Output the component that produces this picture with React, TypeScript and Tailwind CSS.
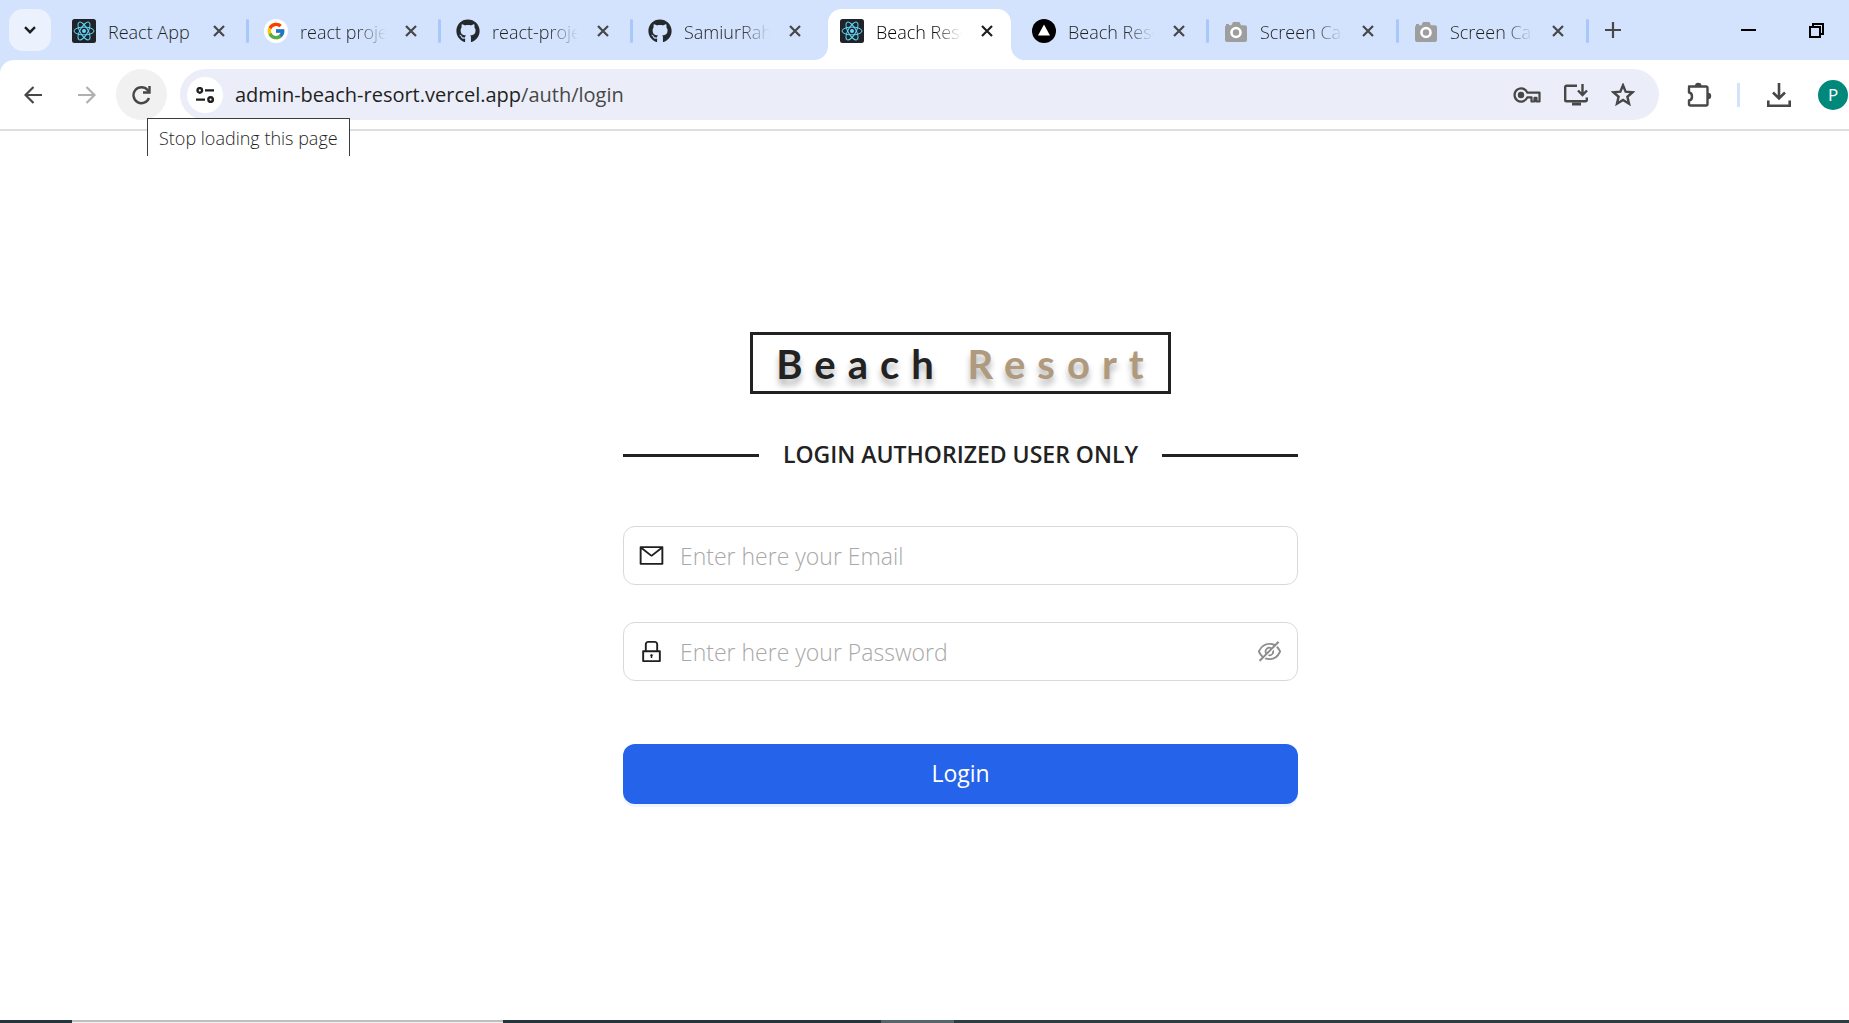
import React from "react";
import { AiOutlineEyeInvisible, AiOutlineLock, AiOutlineMail } from "react-icons/ai";
import { FcGoogle } from "react-icons/fc";
import { FaGithub } from "react-icons/fa";

function ReactFavicon() {
  return (
    <svg viewBox="0 0 24 24" className="size-6">
      <rect width="24" height="24" rx="2.5" fill="#20232a" />
      <g fill="none" stroke="#61dafb" strokeWidth="1">
        <ellipse cx="12" cy="12" rx="10" ry="3.9" />
        <ellipse cx="12" cy="12" rx="10" ry="3.9" transform="rotate(60 12 12)" />
        <ellipse cx="12" cy="12" rx="10" ry="3.9" transform="rotate(120 12 12)" />
      </g>
      <circle cx="12" cy="12" r="2" fill="#61dafb" />
    </svg>
  );
}

function GoogleFavicon() {
  return (
    <span className="flex size-6 items-center justify-center rounded-full bg-white">
      <FcGoogle className="size-5" />
    </span>
  );
}

function GithubFavicon() {
  return <FaGithub className="size-6 text-[#24292f]" />;
}

function VercelFavicon() {
  return (
    <svg viewBox="0 0 24 24" className="size-6">
      <circle cx="12" cy="12" r="12" fill="#000" />
      <path d="M12 5.5 18 16.5H6Z" fill="#fff" />
    </svg>
  );
}

function CameraFavicon() {
  return (
    <svg viewBox="0 0 24 24" className="size-6">
      <path
        d="M2 6.500V5h3v1.200h2.500L9 3h6.500l1.500 3.200H21a2 2 0 0 1 2 2V21a2 2 0 0 1-2 2H3a2 2 0 0 1-2-2V8.500a2 2 0 0 1 1-2Z"
        fill="#9e9e9e"
      />
      <circle cx="12" cy="13.500" r="4.500" fill="#9e9e9e" stroke="#fff" strokeWidth="2.600" />
    </svg>
  );
}

type Tab = {
  title: string;
  icon: () => React.ReactElement;
  active?: boolean;
  line?: boolean;
  narrow?: boolean;
  fade?: boolean;
};

const tabs: Tab[] = [
  { title: "React App", icon: ReactFavicon, line: true },
  { title: "react proje", icon: GoogleFavicon, line: true, fade: true },
  { title: "react-proje", icon: GithubFavicon, line: true, fade: true },
  { title: "SamiurRah", icon: GithubFavicon, fade: true },
  { title: "Beach Reso", icon: ReactFavicon, active: true, fade: true },
  { title: "Beach Reso", icon: VercelFavicon, line: true, fade: true },
  { title: "Screen Cap", icon: CameraFavicon, line: true, narrow: true, fade: true },
  { title: "Screen Cap", icon: CameraFavicon, line: true, narrow: true, fade: true },
];

function TabItem({ title, icon: Icon, active, line, narrow, fade }: Tab) {
  return (
    <div className={`relative flex h-full items-center pt-[9px] pb-2 pl-[15px] ${narrow ? "w-[190px]" : "w-48"}`}>
      {active && (
        <svg viewBox="0 0 211 51" className="absolute bottom-0 -left-[11px] h-[51px] w-[211px]">
          <path d="M0 51C8 51 14 45 14 37V14C14 6 20 0 28 0H183C191 0 197 6 197 14V37C197 45 203 51 211 51Z" fill="#fff" />
        </svg>
      )}
      <div className="relative flex min-w-0 flex-1 items-center">
        <Icon />
        <button
          role="tab"
          aria-selected={!!active}
          className={`ml-3 pt-[2px] text-left text-[18px] leading-6 font-light whitespace-nowrap ${narrow ? "w-[83px]" : "w-[86px]"} ${
            fade ? "[mask-image:linear-gradient(to_right,#000_65%,transparent)]" : ""
          } ${active ? "text-black" : "text-[#1f1f1f]"}`}
        >
          {title}
        </button>
        <button aria-label={`Close ${title}`} className="ml-[13px] flex size-6 items-center justify-center">
          <svg viewBox="0 0 12 12" className={`size-3 ${active ? "text-[#1f1f1f]" : "text-[#474747]"}`}>
            <path d="M1 1 11 11M11 1 1 11" stroke="currentColor" strokeWidth="2.200" />
          </svg>
        </button>
      </div>
      {line && <span className="relative h-6 w-[3px] rounded-sm bg-[#a8c7fa]" />}
    </div>
  );
}

function TabStrip() {
  return (
    <header className="flex h-[60px] items-stretch bg-[#d3e3fd] pl-[9px]">
      <button aria-label="Search tabs" className="mt-[9px] flex size-[42px] items-center justify-center rounded-[14px] bg-[#ebf2fe]">
        <svg viewBox="0 0 12 8" className="h-2 w-3">
          <path d="M1 1.200 6 6.200 11 1.200" fill="none" stroke="#1f1f1f" strokeWidth="2.400" />
        </svg>
      </button>
      <div role="tablist" className="ml-[6px] flex">
        {tabs.map((tab, i) => (
          <TabItem key={i} {...tab} />
        ))}
      </div>
      <button aria-label="New tab" className="ml-3 flex w-6 items-center justify-center">
        <svg viewBox="0 0 16 16" className="size-4">
          <path d="M8 0V16M0 8H16" stroke="#474747" strokeWidth="2.200" />
        </svg>
      </button>
      <div className="ml-auto flex pr-[25px]">
        <button aria-label="Minimize" className="flex items-center pr-[53px]">
          <span className="h-[2px] w-[15px] bg-black" />
        </button>
        <button aria-label="Restore" className="flex items-center">
          <svg viewBox="0 0 15 15" className="size-[15px]">
            <path d="M1 4H11V14H1ZM4 4V1H14V11H11" fill="none" stroke="#000" strokeWidth="2" />
          </svg>
        </button>
      </div>
    </header>
  );
}

function KeyIcon() {
  return (
    <svg viewBox="0 0 28 16" className="h-4 w-7" fill="none" stroke="#474747" strokeWidth="2.200">
      <path d="M14.300 5.600A6.600 6.600 0 1 0 14.300 10.400H18.500V14.500H21.500V10.900H23.500V14.500H26.500V5.600Z" strokeLinejoin="round" />
      <circle cx="8" cy="8" r="2.100" fill="#474747" />
    </svg>
  );
}

function InstallIcon() {
  return (
    <svg viewBox="0 0 26 24" className="h-6 w-[26px]" fill="none" stroke="#474747" strokeWidth="2.400">
      <path d="M14 2.700H3.500A1.300 1.300 0 0 0 2.200 4V17A1.300 1.300 0 0 0 3.500 18.300H22.500A1.300 1.300 0 0 0 23.800 17V14.500" />
      <path d="M9 19.500H18V22.500H9Z" fill="#474747" stroke="none" />
      <path d="M19.500 1V11.500M15 7.500 19.500 12 24 7.500" />
    </svg>
  );
}

function StarIcon() {
  return (
    <svg viewBox="0 0 24 24" className="size-6" fill="none" stroke="#474747" strokeWidth="2.200">
      <path d="M12 3.200 14.400 9 20.800 9.500 16 13.600 17.500 19.900 12 16.500 6.500 19.900 8 13.600 3.200 9.500 9.600 9Z" transform="translate(-1.200 -1.200) scale(1.100)" />
    </svg>
  );
}

function PuzzleIcon() {
  return (
    <svg viewBox="0 0 26 26" className="size-[26px]" fill="none" stroke="#474747" strokeWidth="2.400">
      <path d="M3 4.500H20A1.500 1.500 0 0 1 21.500 6V22A1.500 1.500 0 0 1 20 23.500H4.500A1.500 1.500 0 0 1 3 22V18.500C7 18 7 11 3 10.500V5.500A1 1 0 0 1 4 4.500Z" strokeLinejoin="round" />
      <path d="M9 4A3.200 3.200 0 0 1 15.500 4ZM22 10.800A3.200 3.200 0 0 1 22 17.200Z" fill="#474747" stroke="none" />
    </svg>
  );
}

function Toolbar() {
  return (
    <div className="bg-[#d3e3fd]">
      <div className="flex h-[71px] items-center rounded-tl-[14px] border-b-2 border-[#dedede] bg-white">
        <button aria-label="Back" className="ml-[18px] flex size-[30px] items-center justify-center">
          <svg viewBox="0 0 18 18" className="size-[18px]" fill="none" stroke="#474747" strokeWidth="2.200">
            <path d="M18 9H2M9.500 1 1.500 9 9.500 17" />
          </svg>
        </button>
        <button aria-label="Forward" className="ml-6 flex size-[30px] items-center justify-center">
          <svg viewBox="0 0 18 18" className="size-[18px]" fill="none" stroke="#b0b0b0" strokeWidth="2.200">
            <path d="M0 9H16M8.500 1 16.500 9 8.500 17" />
          </svg>
        </button>
        <div className="relative ml-[14px]">
          <button
            aria-label="Reload"
            aria-describedby="reload-tip"
            className="flex size-[51px] items-center justify-center rounded-full bg-[#f1f1f1]"
          >
            <svg viewBox="0 0 20 20" className="size-5" fill="none" stroke="#474747" strokeWidth="2.400">
              <path d="M17 13A8 8 0 1 1 15.600 5L17 6.800" />
              <path d="M17.500 1V7.500H11" />
            </svg>
          </button>
          <div
            id="reload-tip"
            role="tooltip"
            className="absolute top-[49px] left-[31px] z-10 h-[38px] border border-b-0 border-[#3c3c3c] bg-white px-[11px] pt-[7px] text-[18px] leading-6 font-light whitespace-nowrap text-[#1f1f1f]"
          >
            Stop loading this page
          </div>
        </div>
        <div className="ml-[13px] flex h-[51px] flex-1 items-center rounded-full bg-[#ebeef8] pr-6 pl-[7px]">
          <button aria-label="View site information" className="flex size-9 items-center justify-center rounded-full bg-white">
            <svg viewBox="0 0 18 16" className="h-4 w-[18px]" fill="none" stroke="#1f1f1f" strokeWidth="2.400">
              <circle cx="3.800" cy="3.400" r="2.300" />
              <path d="M9 3.400H18M0 12.600H9" />
              <circle cx="14.600" cy="12.600" r="2.300" />
            </svg>
          </button>
          <div role="textbox" aria-label="Address" className="ml-3 min-w-0 flex-1 text-[20px] leading-7 whitespace-nowrap text-[#1f1f1f]">
            admin-beach-resort.vercel.app<span className="text-[#474747]">/auth/login</span>
          </div>
          <div className="flex items-center gap-[22px]">
            <button aria-label="Manage passwords">
              <KeyIcon />
            </button>
            <button aria-label="Install app">
              <InstallIcon />
            </button>
            <button aria-label="Bookmark this tab">
              <StarIcon />
            </button>
          </div>
        </div>
        <button aria-label="Extensions" className="ml-[27px]">
          <PuzzleIcon />
        </button>
        <span className="ml-[25px] h-6 w-[3px] bg-[#d3e3fd]" />
        <button aria-label="Downloads" className="ml-[27px]">
          <svg viewBox="0 0 24 24" className="size-6" fill="none" stroke="#474747" strokeWidth="2.600">
            <path d="M12 0V15.500M6 9.500 12 15.500 18 9.500M1.300 17.500V22.700H22.700V17.500" />
          </svg>
        </button>
        <button aria-label="Profile" className="mr-[1px] ml-[27px] flex size-[30px] items-center justify-center rounded-full bg-[#00897b] text-[17px] text-white">
          P
        </button>
      </div>
    </div>
  );
}

const fieldClass =
  "flex h-[59px] items-center gap-[15px] rounded-xl border border-[#d9d9d9] px-[14px] text-[#1f1f1f] focus-within:border-blue-600";
const inputClass =
  "min-w-0 flex-1 bg-transparent pt-[2px] text-[23px] leading-8 font-light outline-none placeholder:text-[#a8a8a8]";

function LoginForm() {
  return (
    <form className="flex w-[675px] max-w-full flex-col" onSubmit={(e) => e.preventDefault()}>
      <h1 className="flex h-[62px] items-center self-center border-3 border-[#222] pt-[2px] pr-3 pl-[23px] font-['Lato',sans-serif] text-[40px] leading-none font-bold tracking-[12px] whitespace-nowrap text-[#222] [text-shadow:0_6px_6px_rgba(0,0,0,0.3)]">
        Beach&nbsp;<span className="text-[#af9a7d]">Resort</span>
      </h1>
      <div className="mt-[44px] flex items-center gap-6">
        <span className="h-[3px] flex-1 bg-[#222]" />
        <h2 className="pb-1 text-[23px] leading-8 font-semibold text-[#222]">LOGIN AUTHORIZED USER ONLY</h2>
        <span className="h-[3px] flex-1 bg-[#222]" />
      </div>
      <label className={`mt-[52px] ${fieldClass}`}>
        <AiOutlineMail className="size-[27px]" />
        <input type="email" aria-label="Email" placeholder="Enter here your Email" className={inputClass} />
      </label>
      <div className={`mt-[37px] ${fieldClass}`}>
        <AiOutlineLock className="size-[27px]" />
        <input type="password" aria-label="Password" placeholder="Enter here your Password" className={inputClass} />
        <button type="button" aria-label="Show password" className="text-[#8c8c8c]">
          <AiOutlineEyeInvisible className="size-[27px]" />
        </button>
      </div>
      <button
        type="submit"
        className="mt-[63px] h-[60px] rounded-xl bg-[#2563eb] text-[23px] text-white shadow-[0_3px_0_rgba(5,145,255,0.08)]"
      >
        Login
      </button>
    </form>
  );
}

function TaskbarEdge() {
  return (
    <div className="flex h-[3px] bg-[#22363c]">
      <span className="w-[72px]" />
      <span className="w-[431px] border-t-2 border-[#bfbfbf] bg-[#f1f1f1]" />
      <span className="w-[378px]" />
      <span className="w-[73px] bg-[#56656a]" />
      <span className="flex-1 bg-[#2c3d41]" />
    </div>
  );
}

export default function App() {
  return (
    <div className="flex min-h-screen flex-col bg-white font-['Open_Sans','Noto_Sans',sans-serif]">
      <TabStrip />
      <Toolbar />
      <main className="flex flex-1 items-center justify-center pb-4 pl-[72px]">
        <LoginForm />
      </main>
      <TaskbarEdge />
    </div>
  );
}
